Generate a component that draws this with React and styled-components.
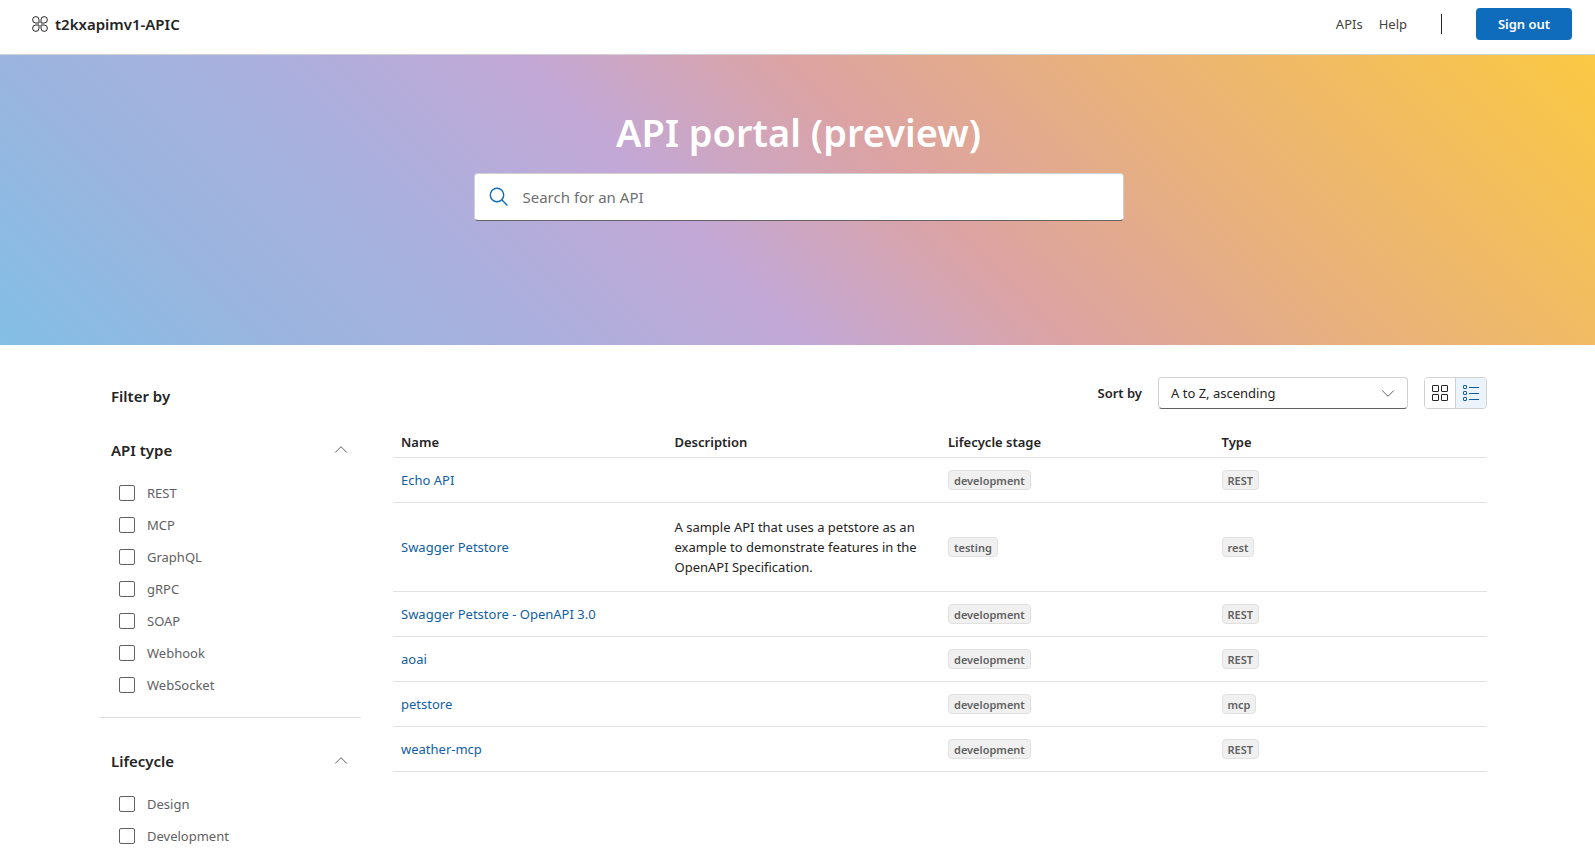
import React, { useState } from "react";
import styled, { createGlobalStyle, css } from "styled-components";

const Global = createGlobalStyle`
  *, *::before, *::after { box-sizing: border-box; }
  body {
    margin: 0;
    background: #fff;
    color: #242424;
    font-family: "Segoe UI", "Noto Sans", "Open Sans", sans-serif;
    font-size: 13px;
    line-height: 20px;
  }
  button, input, select { font: inherit; color: inherit; }
  a { text-decoration: none; }
`;

const Header = styled.header`
  display: flex;
  align-items: center;
  justify-content: space-between;
  height: 55px;
  padding: 0 23px 6px 32px;
  border-bottom: 1px solid #d1d1d1;
`;

const Brand = styled.a`
  display: flex;
  align-items: center;
  gap: 7px;
  color: #242424;
  font-size: 15px;
  font-weight: 600;
`;

const HeaderNav = styled.nav`
  display: flex;
  align-items: center;
  gap: 16px;
`;

const NavLink = styled.a`
  color: #424242;
`;

const Divider = styled.span`
  width: 1px;
  height: 20px;
  margin: 0 18px;
  background: #242424;
`;

const PrimaryButton = styled.button`
  width: 96px;
  height: 32px;
  border: 0;
  border-radius: 4px;
  background: #0f6cbd;
  color: #fff;
  font-weight: 600;
`;

const Hero = styled.section`
  display: flex;
  flex-direction: column;
  align-items: center;
  gap: 15px;
  min-height: 290px;
  padding: 51px 24px 51px 26px;
  background: linear-gradient(45deg, #83bfe6 0%, #9ab5df 15%, #a9b0de 28%, #c3a8d6 43%, #dca3a3 57%, #e8b07e 72%, #fbc943 100%);
`;

const HeroTitle = styled.h1`
  margin: 0;
  color: #fff;
  font-size: 38px;
  line-height: 52px;
  font-weight: 600;
`;

const SearchBox = styled.label`
  display: flex;
  align-items: center;
  gap: 14px;
  width: 100%;
  max-width: 650px;
  height: 48px;
  padding: 0 14px;
  border: 1px solid #d1d1d1;
  border-bottom-color: #616161;
  border-radius: 4px;
  background: #fff;
  color: #0f6cbd;
`;

const SearchInput = styled.input`
  flex: 1;
  min-width: 0;
  padding: 0;
  border: 0;
  outline: 0;
  background: transparent;
  color: #242424;
  font-size: 15px;
  &::placeholder { color: #707070; opacity: 1; }
`;

const Content = styled.main`
  display: grid;
  grid-template-columns: 262px minmax(0, 1fr);
  gap: 32px;
  padding: 32px 108px 0 99px;
`;

const Sidebar = styled.aside`
  display: flex;
  flex-direction: column;
`;

const SidebarTitle = styled.h2`
  margin: 0;
  padding: 8px 12px;
  font-size: 15px;
  line-height: 22px;
  font-weight: 600;
`;

const FilterSection = styled.section`
  padding: 13px 0 16px;
  border-bottom: 1px solid #e0e0e0;
  & + & { padding-top: 21px; }
`;

const FilterToggle = styled.button`
  display: flex;
  align-items: center;
  justify-content: space-between;
  width: 100%;
  height: 44px;
  padding: 0 12px;
  border: 0;
  background: transparent;
  font-size: 15px;
  font-weight: 600;
`;

const FilterList = styled.div`
  display: flex;
  flex-direction: column;
  padding: 5px 20px 0;
`;

const FilterOption = styled.label`
  display: flex;
  align-items: center;
  gap: 12px;
  height: 32px;
  color: #616161;
`;

const Checkbox = styled.input`
  appearance: none;
  width: 16px;
  height: 16px;
  margin: 0;
  border: 1px solid #616161;
  border-radius: 2px;
  background: #fff;
  &:checked { background: #0f6cbd; border-color: #0f6cbd; }
`;

const Toolbar = styled.div`
  display: flex;
  align-items: center;
  justify-content: flex-end;
  gap: 16px;
`;

const SortLabel = styled.label`
  font-weight: 600;
`;

const SelectWrap = styled.div`
  display: grid;
  align-items: center;
  width: 250px;
  color: #616161;
  & > * { grid-area: 1 / 1; }
  & > svg { justify-self: end; margin-right: 12px; pointer-events: none; }
`;

const Select = styled.select`
  appearance: none;
  width: 100%;
  height: 32px;
  padding: 0 32px 0 12px;
  border: 1px solid #d1d1d1;
  border-bottom-color: #616161;
  border-radius: 4px;
  background: #fff;
  color: #242424;
`;

const ViewSwitch = styled.div`
  display: flex;
  width: 63px;
  height: 32px;
  border: 1px solid #d1d1d1;
  border-radius: 4px;
  overflow: hidden;
`;

const ViewButton = styled.button`
  display: flex;
  flex: 1;
  align-items: center;
  justify-content: center;
  padding: 0;
  border: 0;
  background: #fff;
  color: #242424;
  & + & { border-left: 1px solid #d1d1d1; }
  ${(p) => p.$active && css`
    background: #ebf3fc;
    color: #115ea3;
  `}
`;

const Table = styled.table`
  width: 100%;
  margin-top: 18px;
  border-collapse: collapse;
  table-layout: fixed;
`;

const HeadCell = styled.th`
  height: 30px;
  padding: 0 8px;
  border-bottom: 1px solid #e0e0e0;
  font-weight: 600;
  text-align: left;
`;

const Cell = styled.td`
  height: 45px;
  padding: ${(p) => (p.$text ? "14px 8px" : "0 8px")};
  border-bottom: 1px solid #e0e0e0;
  vertical-align: middle;
`;

const ApiLink = styled.a`
  color: #115ea3;
`;

const Badge = styled.span`
  display: inline-block;
  height: 20px;
  padding: 0 5px;
  border: 1px solid #e0e0e0;
  border-radius: 4px;
  background: #f0f0f0;
  color: #616161;
  font-size: 11px;
  line-height: 19px;
  font-weight: 600;
  vertical-align: middle;
`;

const LogoIcon = () => (
  <svg width="16" height="16" viewBox="0 0 16 16" fill="none" stroke="currentColor" aria-hidden="true">
    <path d="M7 7H3.8A3.2 3.2 0 1 1 7 3.8ZM9 7V3.8A3.2 3.2 0 1 1 12.2 7ZM7 9v3.2A3.2 3.2 0 1 1 3.8 9ZM9 9h3.2A3.2 3.2 0 1 1 9 12.2Z" />
  </svg>
);

const SearchIcon = () => (
  <svg width="20" height="20" viewBox="0 0 20 20" fill="none" stroke="currentColor" strokeWidth="1.4" aria-hidden="true">
    <circle cx="8" cy="8" r="6.7" />
    <path d="M12.8 12.8 18.4 18.4" />
  </svg>
);

const Chevron = ({ up }) => (
  <svg width="16" height="16" viewBox="0 0 16 16" fill="none" stroke="#616161" aria-hidden="true">
    <path d={up ? "M2.2 10.5 8 4.7l5.8 5.8" : "M2.2 5.5 8 11.3l5.8-5.8"} />
  </svg>
);

const GridIcon = () => (
  <svg width="18" height="18" viewBox="0 0 18 18" fill="none" stroke="currentColor" aria-hidden="true">
    <rect x="1.5" y="1.5" width="6" height="6" rx="0.5" />
    <rect x="10.5" y="1.5" width="6" height="6" rx="0.5" />
    <rect x="1.5" y="10.5" width="6" height="6" rx="0.5" />
    <rect x="10.5" y="10.5" width="6" height="6" rx="0.5" />
  </svg>
);

const ListIcon = () => (
  <svg width="18" height="18" viewBox="0 0 18 18" fill="none" stroke="currentColor" aria-hidden="true">
    <rect x="1.5" y="1.5" width="3" height="3" rx="0.5" />
    <rect x="1.5" y="7.5" width="3" height="3" rx="0.5" />
    <rect x="1.5" y="13.5" width="3" height="3" rx="0.5" />
    <path d="M7 3.5h10M7 9.5h10M7 15.5h10" />
  </svg>
);

const filters = [
  { title: "API type", options: ["REST", "MCP", "GraphQL", "gRPC", "SOAP", "Webhook", "WebSocket"] },
  { title: "Lifecycle", options: ["Design", "Development"] },
];

const apis = [
  { name: "Echo API", stage: "development", type: "REST" },
  {
    name: "Swagger Petstore",
    description: "A sample API that uses a petstore as an example to demonstrate features in the OpenAPI Specification.",
    stage: "testing",
    type: "rest",
  },
  { name: "Swagger Petstore - OpenAPI 3.0", stage: "development", type: "REST" },
  { name: "aoai", stage: "development", type: "REST" },
  { name: "petstore", stage: "development", type: "mcp" },
  { name: "weather-mcp", stage: "development", type: "REST" },
];

function FilterGroup({ title, options }) {
  const [open, setOpen] = useState(true);
  return (
    <FilterSection>
      <FilterToggle type="button" aria-expanded={open} onClick={() => setOpen(!open)}>
        {title}
        <Chevron up={open} />
      </FilterToggle>
      {open && (
        <FilterList>
          {options.map((option) => (
            <FilterOption key={option}>
              <Checkbox type="checkbox" />
              {option}
            </FilterOption>
          ))}
        </FilterList>
      )}
    </FilterSection>
  );
}

export default function App() {
  const [view, setView] = useState("list");
  return (
    <>
      <Global />
      <Header>
        <Brand href="#">
          <LogoIcon />
          t2kxapimv1-APIC
        </Brand>
        <HeaderNav>
          <NavLink href="#apis">APIs</NavLink>
          <NavLink href="#help">Help</NavLink>
          <Divider />
          <PrimaryButton type="button">Sign out</PrimaryButton>
        </HeaderNav>
      </Header>
      <Hero>
        <HeroTitle>API portal (preview)</HeroTitle>
        <SearchBox>
          <SearchIcon />
          <SearchInput type="search" placeholder="Search for an API" aria-label="Search for an API" />
        </SearchBox>
      </Hero>
      <Content>
        <Sidebar>
          <SidebarTitle>Filter by</SidebarTitle>
          {filters.map((group) => (
            <FilterGroup key={group.title} {...group} />
          ))}
        </Sidebar>
        <section>
          <Toolbar>
            <SortLabel htmlFor="sort">Sort by</SortLabel>
            <SelectWrap>
              <Select id="sort" defaultValue="asc">
                <option value="asc">A to Z, ascending</option>
                <option value="desc">Z to A, descending</option>
              </Select>
              <Chevron />
            </SelectWrap>
            <ViewSwitch>
              <ViewButton type="button" aria-label="Grid view" $active={view === "grid"} onClick={() => setView("grid")}>
                <GridIcon />
              </ViewButton>
              <ViewButton type="button" aria-label="List view" $active={view === "list"} onClick={() => setView("list")}>
                <ListIcon />
              </ViewButton>
            </ViewSwitch>
          </Toolbar>
          <Table>
            <thead>
              <tr>
                <HeadCell>Name</HeadCell>
                <HeadCell>Description</HeadCell>
                <HeadCell>Lifecycle stage</HeadCell>
                <HeadCell>Type</HeadCell>
              </tr>
            </thead>
            <tbody>
              {apis.map((api) => (
                <tr key={api.name}>
                  <Cell><ApiLink href="#api">{api.name}</ApiLink></Cell>
                  <Cell $text={Boolean(api.description)}>{api.description}</Cell>
                  <Cell><Badge>{api.stage}</Badge></Cell>
                  <Cell><Badge>{api.type}</Badge></Cell>
                </tr>
              ))}
            </tbody>
          </Table>
        </section>
      </Content>
    </>
  );
}
